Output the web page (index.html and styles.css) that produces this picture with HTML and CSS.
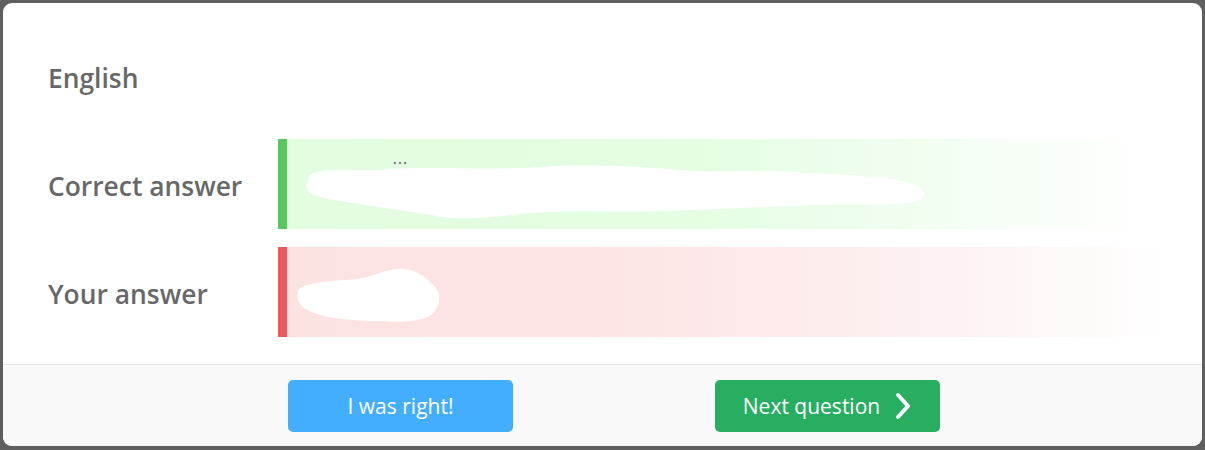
FILE: index.html
```html
<!DOCTYPE html>
<html lang="en">
<head>
<meta charset="utf-8">
<title>Answer review</title>
<link rel="stylesheet" href="styles.css">
</head>
<body>
<div class="modal">
  <div class="content">
    <div class="row">
      <div class="label">English</div>
      <div class="value"></div>
    </div>
    <div class="row">
      <div class="label">Correct answer</div>
      <div class="value bar correct">
        <svg class="scribble" width="640" height="80" viewBox="0 0 640 80">
          <path d="M18 24 C30 16 60 20 90 19 C130 14 190 20 250 16 C300 12 350 16 400 20 C440 22 480 18 520 22 C560 24 590 26 610 30 C632 34 638 44 626 50 C600 56 560 52 520 54 C470 56 420 58 380 60 C330 62 280 58 240 62 C200 66 160 70 140 64 C110 60 90 56 60 52 C36 48 18 46 14 36 Z" fill="#fff"/>
          <circle cx="103" cy="12" r="1.3" fill="#8a8a8a"/><circle cx="108" cy="12" r="1.3" fill="#8a8a8a"/><circle cx="113" cy="12" r="1.3" fill="#8a8a8a"/>
        </svg>
      </div>
    </div>
    <div class="row">
      <div class="label">Your answer</div>
      <div class="value bar wrong">
        <svg class="scribble" width="170" height="80" viewBox="0 0 170 80">
          <path d="M14 34 C26 26 50 26 74 24 C92 20 106 12 120 14 C134 16 142 24 148 30 C156 36 156 48 150 56 C144 66 120 68 96 66 C72 66 50 64 36 60 C20 56 8 48 14 34 Z" fill="#fff"/>
        </svg>
      </div>
    </div>
  </div>
  <div class="footer">
    <button class="btn btn-blue" type="button">I was right!</button>
    <button class="btn btn-green" type="button">Next question
      <svg class="chev" width="18" height="28" viewBox="0 0 18 28"><polyline points="4,3 14,14 4,25" fill="none" stroke="#fff" stroke-width="4" stroke-linecap="round" stroke-linejoin="round"/></svg>
    </button>
  </div>
</div>
</body>
</html>
```
FILE: styles.css
```css
html, body {
  margin: 0;
  padding: 0;
  background: #5f5f5f;
  font-family: "Open Sans", "Noto Sans", sans-serif;
}
body {
  padding: 3px 3px 4px 3px;
  box-sizing: border-box;
  height: 450px;
}
.modal {
  background: #fff;
  border-radius: 9px;
  overflow: hidden;
  height: 443px;
  display: flex;
  flex-direction: column;
}
.content {
  padding: 28px 0 27px 45px;
  display: flex;
  flex-direction: column;
  gap: 18px;
}
.row {
  display: flex;
  align-items: center;
  height: 90px;
}
.label {
  width: 230px;
  flex: none;
  font-size: 26.4px;
  font-weight: 600;
  color: #686868;
  padding-top: 3px;
}
.value {
  width: 890px;
  height: 90px;
  position: relative;
}
.bar {
  box-sizing: border-box;
  border-left: 9px solid;
}
.correct {
  border-left-color: #54c95e;
  background: linear-gradient(to right, #e3fde1 0%, #e5fde3 45%, #f1fef0 72%, #ffffff 98%);
}
.wrong {
  border-left-color: #ee585a;
  background: linear-gradient(to right, #fde2e2 0%, #fde4e4 35%, #fdf0f0 70%, #ffffff 100%);
}
.scribble {
  position: absolute;
  left: 5px;
  top: 12px;
}
.wrong .scribble {
  left: -2px;
  top: 8px;
}
.footer {
  flex: 1;
  background: #f9f9f9;
  border-top: 1px solid #e6e6e6;
  display: flex;
  align-items: flex-start;
  padding: 15px 0 0 285px;
  gap: 202px;
}
.btn {
  width: 225px;
  height: 52px;
  border: none;
  border-radius: 5px;
  color: #fff;
  font-family: "Open Sans", "Noto Sans", sans-serif;
  font-size: 21px;
  display: flex;
  align-items: center;
  justify-content: center;
  gap: 14px;
  padding: 0;
}
.btn-blue { background: #43aefe; }
.btn-green { background: #27ae61; }
.chev { display: block; }
```
